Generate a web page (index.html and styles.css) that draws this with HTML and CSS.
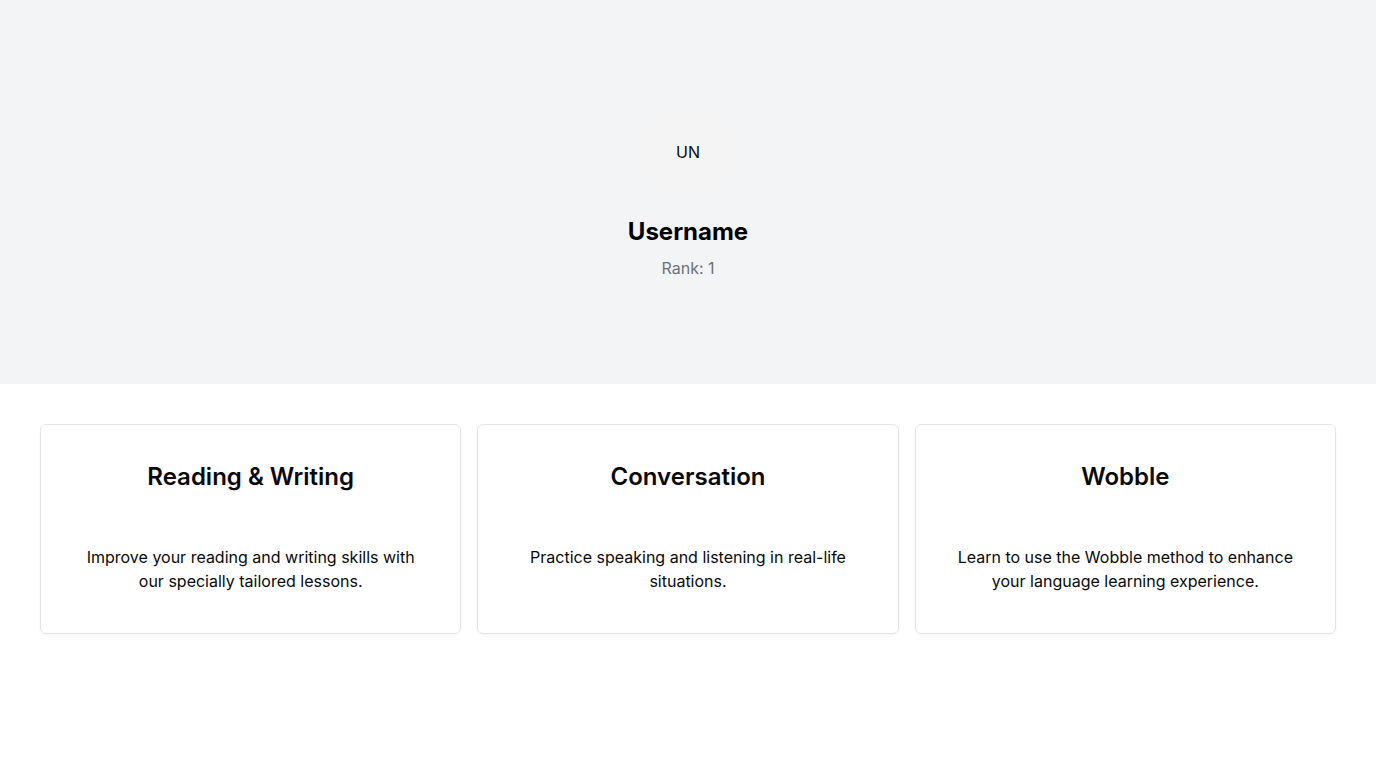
FILE: index.html
```html
<!DOCTYPE html>
<html lang="en">
<head>
<meta charset="utf-8">
<meta name="viewport" content="width=device-width, initial-scale=1">
<title>Username</title>
<link rel="stylesheet" href="styles.css">
</head>
<body>
<main class="page">
  <header class="profile">
    <div class="avatar">UN</div>
    <h1 class="profile-name">Username</h1>
    <p class="profile-rank">Rank: 1</p>
  </header>
  <section class="cards">
    <article class="card">
      <h2 class="card-title">Reading &amp; Writing</h2>
      <p class="card-text">Improve your reading and writing skills with our specially tailored lessons.</p>
    </article>
    <article class="card">
      <h2 class="card-title">Conversation</h2>
      <p class="card-text">Practice speaking and listening in real-life situations.</p>
    </article>
    <article class="card">
      <h2 class="card-title">Wobble</h2>
      <p class="card-text">Learn to use the Wobble method to enhance your language learning experience.</p>
    </article>
  </section>
</main>
</body>
</html>
```
FILE: styles.css
```css
* {
  box-sizing: border-box;
  margin: 0;
}

body {
  background: #fff;
  color: #09090b;
  font: 16px/24px Inter, sans-serif;
}

.page {
  display: flex;
  flex-direction: column;
  min-height: 100vh;
}

.profile {
  display: flex;
  flex-direction: column;
  align-items: center;
  justify-content: center;
  min-height: 50vh;
  background: #f3f4f6;
}

.avatar {
  display: flex;
  align-items: center;
  justify-content: center;
  width: 96px;
  height: 96px;
  border-radius: 50%;
  background: #f4f4f5;
}

.profile-name {
  margin-top: 16px;
  color: #000;
  font-size: 24px;
  line-height: 32px;
  font-weight: 700;
}

.profile-rank {
  margin-top: 8px;
  color: #6b7280;
}

.cards {
  display: grid;
  grid-template-columns: repeat(3, minmax(0, 1fr));
  gap: 16px;
  padding: 40px;
}

.card {
  padding: 40px;
  border: 1px solid #e4e4e7;
  border-radius: 6px;
  box-shadow: 0 1px 2px rgba(0, 0, 0, 0.05);
  text-align: center;
}

.card-title {
  margin-bottom: 56px;
  font-size: 24px;
  line-height: 24px;
  font-weight: 600;
}
```
